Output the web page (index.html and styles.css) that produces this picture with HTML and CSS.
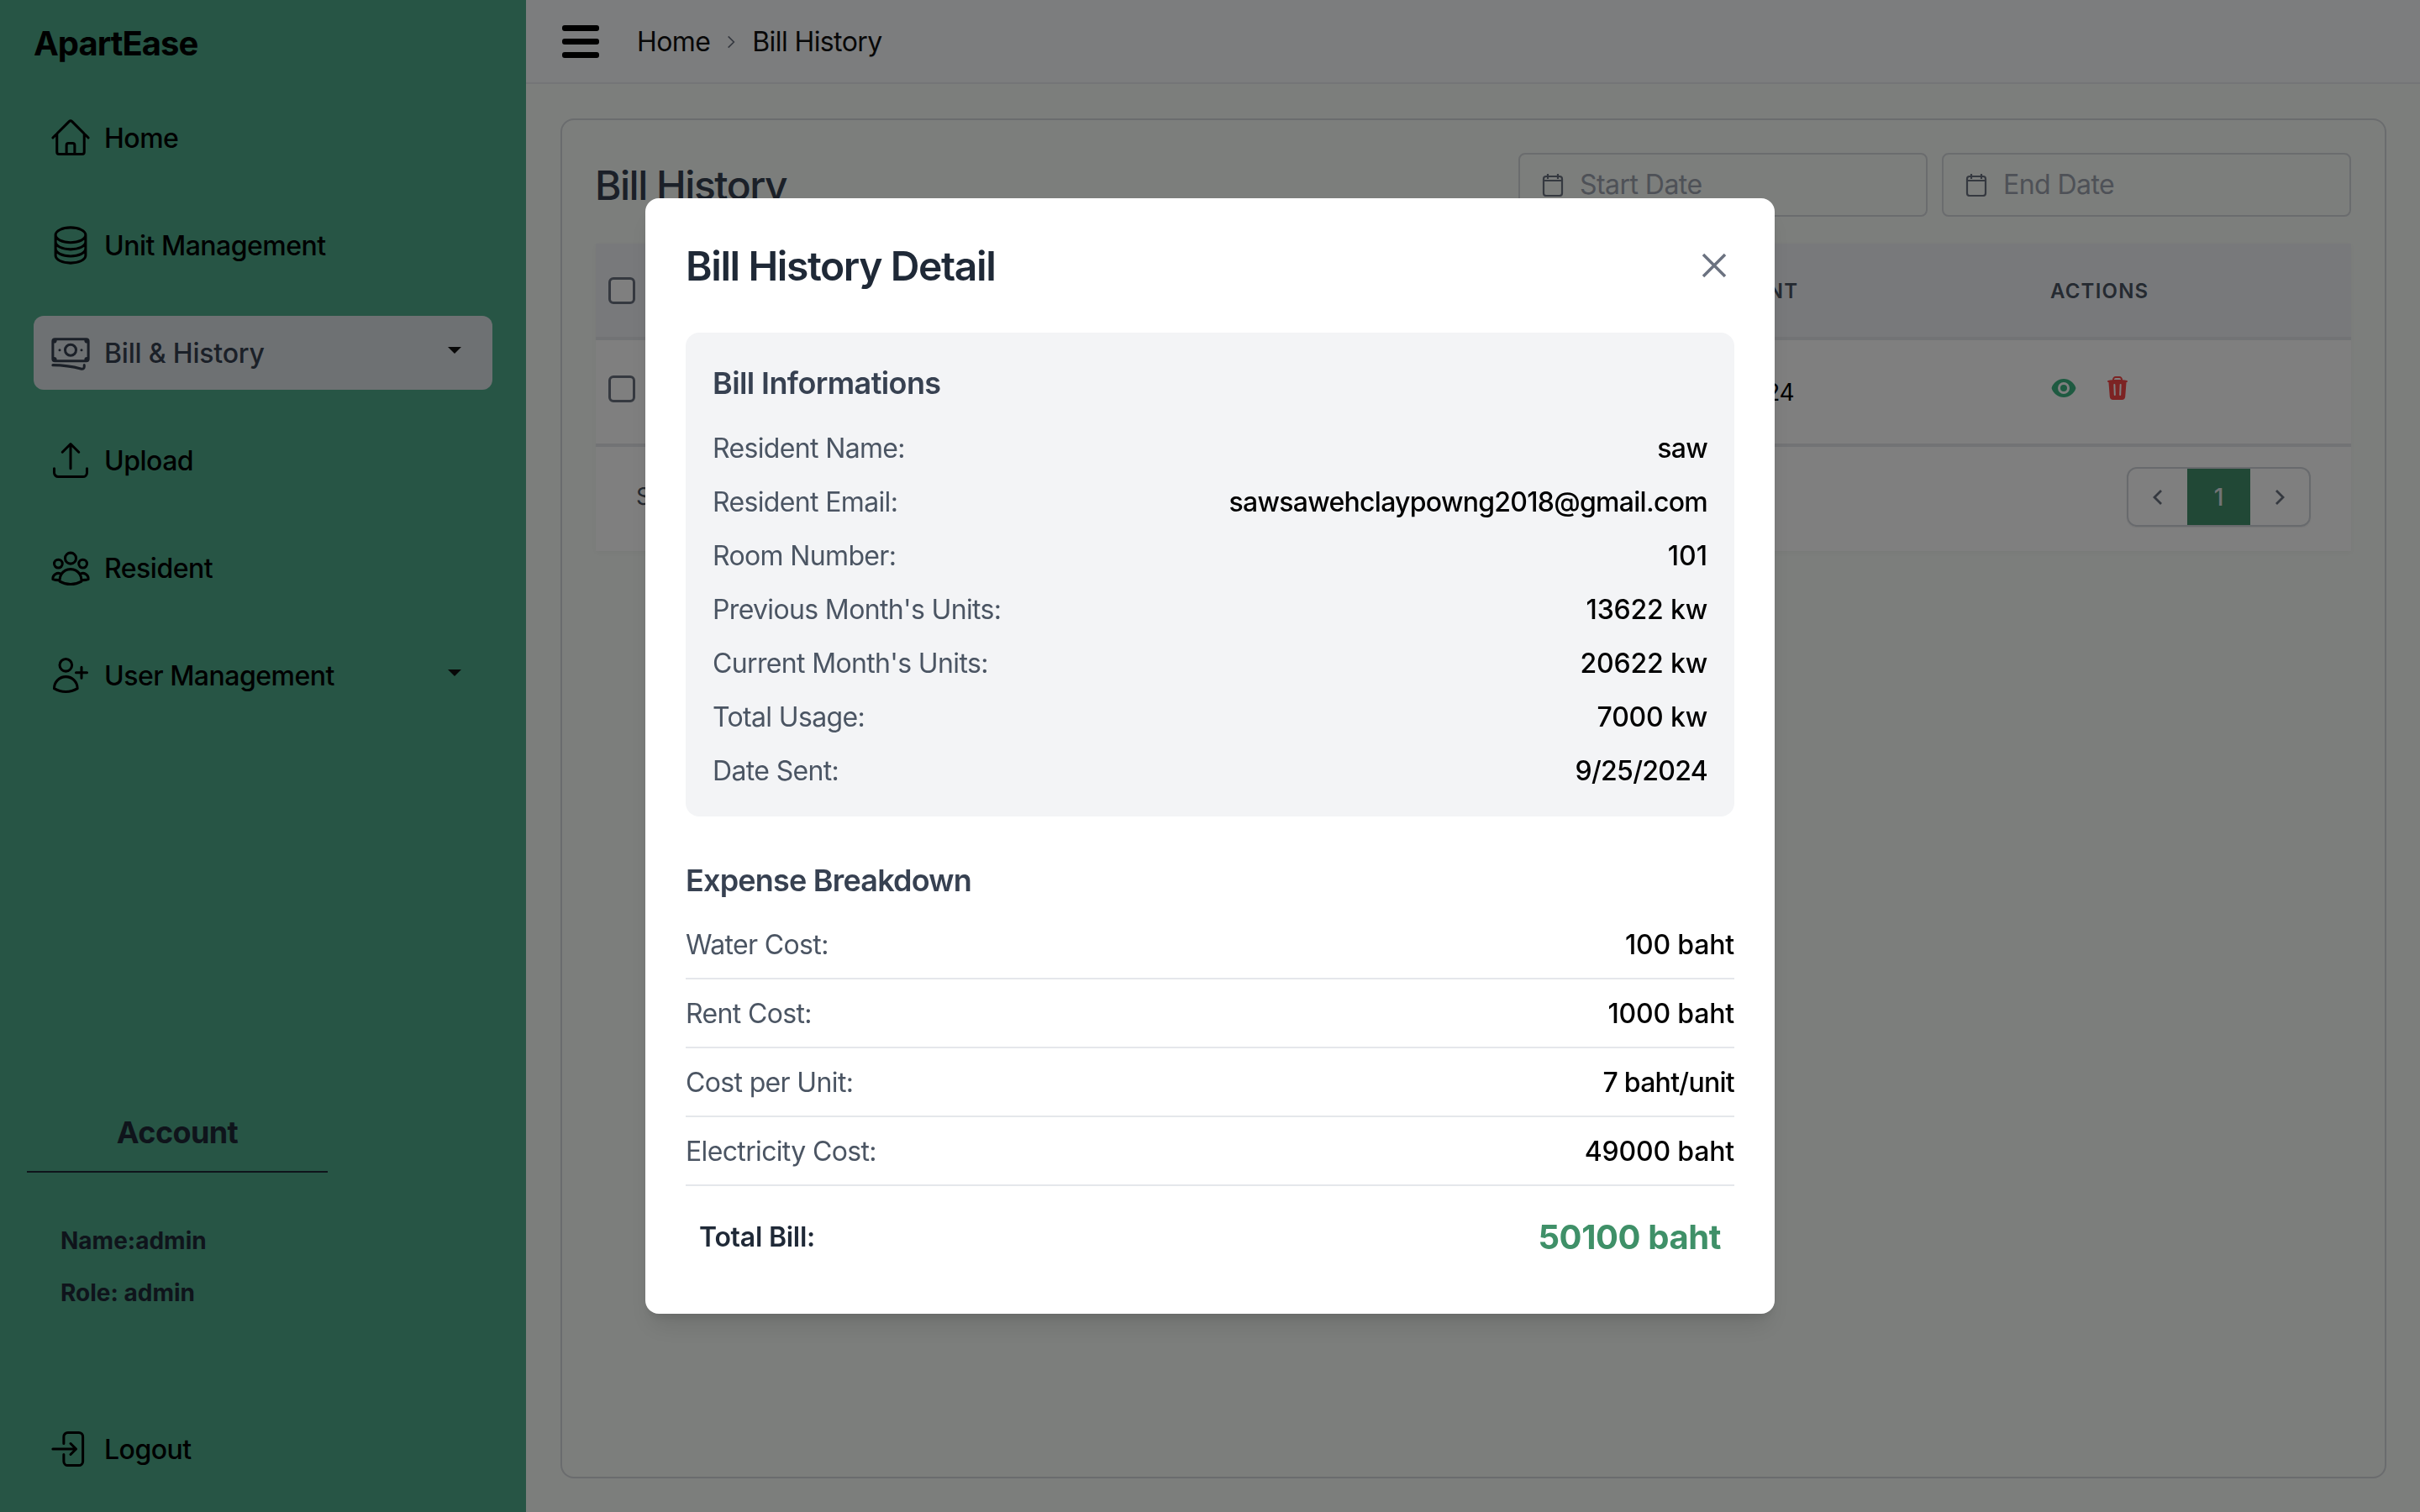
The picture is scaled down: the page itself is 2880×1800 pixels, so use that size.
FILE: index.html
```html
<!DOCTYPE html>
<html lang="en">
<head>
<meta charset="utf-8">
<title>ApartEase - Bill History</title>
<link rel="stylesheet" href="styles.css">
</head>
<body>
<div class="app">
  <aside class="sidebar">
    <div class="logo">ApartEase</div>
    <nav class="nav">
      <a class="nav-item">
        <svg class="nav-icon" viewBox="0 0 24 24"><path d="m2.25 12 8.954-8.955c.44-.439 1.152-.439 1.591 0L21.75 12M4.5 9.75v10.125c0 .621.504 1.125 1.125 1.125H9.75v-4.875c0-.621.504-1.125 1.125-1.125h2.25c.621 0 1.125.504 1.125 1.125V21h4.125c.621 0 1.125-.504 1.125-1.125V9.75M8.25 21h8.25"/></svg>
        <span>Home</span>
      </a>
      <a class="nav-item">
        <svg class="nav-icon" viewBox="0 0 24 24"><path d="M20.25 6.375c0 2.278-3.694 4.125-8.25 4.125S3.75 8.653 3.75 6.375m16.5 0c0-2.278-3.694-4.125-8.25-4.125S3.75 4.097 3.75 6.375m16.5 0v11.25c0 2.278-3.694 4.125-8.25 4.125s-8.25-1.847-8.25-4.125V6.375m16.5 0v3.75m-16.5-3.75v3.75m16.5 0v3.75C20.25 16.153 16.556 18 12 18s-8.25-1.847-8.25-4.125v-3.75m16.5 0c0 2.278-3.694 4.125-8.25 4.125s-8.25-1.847-8.25-4.125"/></svg>
        <span>Unit Management</span>
      </a>
      <a class="nav-item active">
        <svg class="nav-icon" viewBox="0 0 24 24"><path d="M2.25 18.75a60.07 60.07 0 0 1 15.797 2.101c.727.198 1.453-.342 1.453-1.096V18.75M3.75 4.5v.75A.75.75 0 0 1 3 6h-.75m0 0v-.375c0-.621.504-1.125 1.125-1.125H20.25M2.25 6v9m18-10.5v.75c0 .414.336.75.75.75h.75m-1.5-1.5h.375c.621 0 1.125.504 1.125 1.125v9.75c0 .621-.504 1.125-1.125 1.125h-.375m1.5-1.5H21a.75.75 0 0 0-.75.75v.75m0 0H3.75m0 0h-.375a1.125 1.125 0 0 1-1.125-1.125V15m1.5 1.5v-.75A.75.75 0 0 0 3 15h-.75M15 10.5a3 3 0 1 1-6 0 3 3 0 0 1 6 0Zm3 0h.008v.008H18V10.5Zm-12 0h.008v.008H6V10.5Z"/></svg>
        <span>Bill &amp; History</span>
        <i class="caret"></i>
      </a>
      <a class="nav-item">
        <svg class="nav-icon" viewBox="0 0 24 24"><path d="M3 16.5v2.25A2.25 2.25 0 0 0 5.25 21h13.5A2.25 2.25 0 0 0 21 18.75V16.5m-13.5-9L12 3m0 0 4.5 4.5M12 3v13.5"/></svg>
        <span>Upload</span>
      </a>
      <a class="nav-item">
        <svg class="nav-icon" viewBox="0 0 24 24"><path d="M18 18.72a9.094 9.094 0 0 0 3.741-.479 3 3 0 0 0-4.682-2.72m.94 3.198.001.031c0 .225-.012.447-.037.666A11.944 11.944 0 0 1 12 21c-2.17 0-4.207-.576-5.963-1.584A6.062 6.062 0 0 1 6 18.719m12 0a5.971 5.971 0 0 0-.941-3.197m0 0A5.995 5.995 0 0 0 12 12.75a5.995 5.995 0 0 0-5.058 2.772m0 0a3 3 0 0 0-4.681 2.72 8.986 8.986 0 0 0 3.74.477m.94-3.197a5.971 5.971 0 0 0-.94 3.197M15 6.75a3 3 0 1 1-6 0 3 3 0 0 1 6 0Zm6 3a2.25 2.25 0 1 1-4.5 0 2.25 2.25 0 0 1 4.5 0Zm-13.5 0a2.25 2.25 0 1 1-4.5 0 2.25 2.25 0 0 1 4.5 0Z"/></svg>
        <span>Resident</span>
      </a>
      <a class="nav-item">
        <svg class="nav-icon" viewBox="0 0 24 24"><path d="M18 7.5v3m0 0v3m0-3h3m-3 0h-3m-2.25-4.125a3.375 3.375 0 1 1-6.75 0 3.375 3.375 0 0 1 6.75 0ZM3 19.235v-.11a6.375 6.375 0 0 1 12.75 0v.109A12.318 12.318 0 0 1 9.374 21c-2.331 0-4.512-.645-6.374-1.766Z"/></svg>
        <span>User Management</span>
        <i class="caret"></i>
      </a>
    </nav>
    <section class="account">
      <h3 class="account-title">Account</h3>
      <div class="account-info">
        <p>Name:admin</p>
        <p>Role: admin</p>
      </div>
    </section>
    <a class="nav-item logout">
      <svg class="nav-icon" viewBox="0 0 24 24"><path d="M8.25 9V5.25A2.25 2.25 0 0 1 10.5 3h6a2.25 2.25 0 0 1 2.25 2.25v13.5A2.25 2.25 0 0 1 16.5 21h-6a2.25 2.25 0 0 1-2.25-2.25V15M12 9l3 3m0 0-3 3m3-3H2.25"/></svg>
      <span>Logout</span>
    </a>
  </aside>

  <main class="main">
    <header class="topbar">
      <div class="burger"><i></i><i></i><i></i></div>
      <div class="crumbs">
        <span>Home</span>
        <svg class="crumb-sep" viewBox="0 0 12 20"><path d="M2 2l8 8-8 8"/></svg>
        <span>Bill History</span>
      </div>
    </header>
    <div class="content">
      <section class="card">
        <div class="card-head">
          <h1 class="page-title">Bill History</h1>
          <div class="dates">
            <div class="date-input">
              <svg class="cal" viewBox="1 0 24 28"><path d="M7 1v6M19 1v6M2 9h22M5 4h16a3 3 0 0 1 3 3v17a3 3 0 0 1-3 3H5a3 3 0 0 1-3-3V7a3 3 0 0 1 3-3Z"/></svg>
              <span>Start Date</span>
            </div>
            <div class="date-input">
              <svg class="cal" viewBox="1 0 24 28"><path d="M7 1v6M19 1v6M2 9h22M5 4h16a3 3 0 0 1 3 3v17a3 3 0 0 1-3 3H5a3 3 0 0 1-3-3V7a3 3 0 0 1 3-3Z"/></svg>
              <span>End Date</span>
            </div>
          </div>
        </div>
        <div class="table">
          <div class="row head">
            <div><i class="check"></i></div>
            <div></div>
            <div class="date-col">DATE SENT</div>
            <div>ACTIONS</div>
          </div>
          <div class="row body">
            <div><i class="check"></i></div>
            <div></div>
            <div class="date-col">9/25/2024</div>
            <div class="actions">
              <svg class="act-eye" viewBox="0 0 24 24"><path fill-rule="evenodd" d="M12 15a3 3 0 1 0 0-6 3 3 0 0 0 0 6ZM1.323 11.447C2.811 6.976 7.028 3.75 12.001 3.75c4.97 0 9.185 3.223 10.675 7.69.12.362.12.752 0 1.113-1.487 4.471-5.705 7.697-10.677 7.697-4.97 0-9.186-3.223-10.675-7.69a1.762 1.762 0 0 1 0-1.113ZM17.25 12a5.25 5.25 0 1 1-10.5 0 5.25 5.25 0 0 1 10.5 0Z"/></svg>
              <svg class="act-trash" viewBox="0 0 24 24"><path fill-rule="evenodd" d="M16.5 4.478v.227a48.816 48.816 0 0 1 3.878.512.75.75 0 1 1-.256 1.478l-.209-.035-1.005 13.07a3 3 0 0 1-2.991 2.77H8.084a3 3 0 0 1-2.991-2.77L4.087 6.66l-.209.035a.75.75 0 0 1-.256-1.478A48.567 48.567 0 0 1 7.5 4.705v-.227c0-1.564 1.213-2.9 2.816-2.951a52.662 52.662 0 0 1 3.369 0c1.603.051 2.815 1.387 2.815 2.951Zm-6.136-1.452a51.196 51.196 0 0 1 3.273 0C14.39 3.05 15 3.684 15 4.478v.113a49.488 49.488 0 0 0-6 0v-.113c0-.794.609-1.428 1.364-1.452Zm-.355 5.945a.75.75 0 1 0-1.5.058l.347 9a.75.75 0 1 0 1.499-.058l-.346-9Zm5.48.058a.75.75 0 1 0-1.498-.058l-.347 9a.75.75 0 0 0 1.5.058l.345-9Z"/></svg>
            </div>
          </div>
          <div class="table-foot">
            <span class="showing">S</span>
            <div class="pager">
              <span class="pg"><svg viewBox="0 0 12 20"><path d="M10 2l-8 8 8 8"/></svg></span>
              <span class="pg current">1</span>
              <span class="pg"><svg viewBox="0 0 12 20"><path d="M2 2l8 8-8 8"/></svg></span>
            </div>
          </div>
        </div>
      </section>
    </div>
  </main>
</div>

<div class="overlay">
  <div class="modal">
    <div class="modal-head">
      <h2>Bill History Detail</h2>
      <svg class="close" viewBox="0 0 30 30"><path d="M2 2l26 26M28 2L2 28"/></svg>
    </div>
    <div class="info-panel">
      <h3>Bill Informations</h3>
      <div class="info-rows">
        <div class="kv"><span>Resident Name:</span><b class="tight">saw</b></div>
        <div class="kv"><span>Resident Email:</span><b class="tight">sawsawehclaypowng2018@gmail.com</b></div>
        <div class="kv"><span>Room Number:</span><b class="wide">101</b></div>
        <div class="kv"><span>Previous Month's Units:</span><b>13622 kw</b></div>
        <div class="kv"><span>Current Month's Units:</span><b>20622 kw</b></div>
        <div class="kv"><span>Total Usage:</span><b>7000 kw</b></div>
        <div class="kv"><span>Date Sent:</span><b class="tight">9/25/2024</b></div>
      </div>
    </div>
    <h3 class="expense-title">Expense Breakdown</h3>
    <div class="expense-rows">
      <div class="kv line"><span>Water Cost:</span><b>100 baht</b></div>
      <div class="kv line"><span>Rent Cost:</span><b>1000 baht</b></div>
      <div class="kv line"><span>Cost per Unit:</span><b class="tight">7 baht/unit</b></div>
      <div class="kv line"><span>Electricity Cost:</span><b>49000 baht</b></div>
    </div>
    <div class="total">
      <span>Total Bill:</span>
      <b>50100 baht</b>
    </div>
  </div>
</div>
</body>
</html>
```
FILE: styles.css
```css
* { box-sizing: border-box; }
html, body { margin: 0; height: 100%; }
body {
  font-family: Inter, "Noto Sans", "Liberation Sans", sans-serif;
  font-size: 32px;
  line-height: 48px;
  color: #000;
  background: #fff;
  overflow: hidden;
}
h1, h2, h3, p { margin: 0; }

.app { display: flex; height: 1800px; }

/* Sidebar */
.sidebar {
  width: 626px;
  flex: none;
  background: #4eaa8a;
  display: flex;
  flex-direction: column;
  padding: 24px 0 31px;
}
.logo {
  font-size: 40px;
  line-height: 56px;
  font-weight: 700;
  letter-spacing: -1px;
  padding-left: 40px;
  margin-bottom: 40px;
}
.nav {
  display: flex;
  flex-direction: column;
  gap: 40px;
  padding: 0 40px;
}
.nav-item {
  height: 88px;
  display: flex;
  align-items: center;
  padding-left: 18px;
  gap: 14px;
  border-radius: 12px;
  font-weight: 500;
  letter-spacing: -0.5px;
  color: #000;
  position: relative;
}
.nav-item span { padding-top: 2px; }
.nav-item.active { background: #dde3e6; color: #374151; letter-spacing: -0.2px; }
.nav-icon {
  width: 52px;
  height: 52px;
  flex: none;
  fill: none;
  stroke: currentColor;
  stroke-width: 1.4;
  stroke-linecap: round;
  stroke-linejoin: round;
}
.caret {
  position: absolute;
  left: 493px;
  top: 37px;
  width: 0;
  height: 0;
  border-left: 8px solid transparent;
  border-right: 8px solid transparent;
  border-top: 8px solid #111;
}
.account { margin-top: auto; width: 358px; margin-left: 32px; }
.account-title {
  font-size: 36px;
  line-height: 56px;
  font-weight: 700;
  letter-spacing: -0.6px;
  text-align: center;
  color: #1f2937;
  padding-bottom: 18px;
  border-bottom: 2px solid #1f2937;
}
.account-info {
  padding: 61px 0 0 40px;
  font-size: 28px;
  line-height: 40px;
  font-weight: 700;
  color: #1f2937;
  display: flex;
  flex-direction: column;
  gap: 22px;
}
.logout { margin: 122px 40px 0; }

/* Main */
.main { flex: 1; display: flex; flex-direction: column; background: #fff; min-width: 0; }
.topbar {
  height: 100px;
  flex: none;
  display: flex;
  align-items: center;
  padding-left: 43px;
  background: #f8fafd;
  border-bottom: 2px solid #e9ebee;
}
.burger { width: 44px; display: flex; flex-direction: column; gap: 9px; margin-right: 45px; }
.burger i { display: block; height: 7px; border-radius: 3px; background: #000; }
.crumbs { display: flex; align-items: center; gap: 20px; color: #111; letter-spacing: -0.6px; padding-top: 1px; }
.crumb-sep { width: 10px; height: 18px; fill: none; stroke: #6b7280; stroke-width: 2; }

.content { flex: 1; display: flex; padding: 41px 40px 40px 41px; min-height: 0; background: #f8fcf8; }
.card {
  flex: 1;
  border: 2px solid #d5d8dc;
  border-radius: 16px;
  padding: 39px 40px 0;
}
.card-head {
  display: flex;
  justify-content: space-between;
  align-items: center;
  height: 75px;
  margin-bottom: 33px;
}
.page-title {
  font-size: 48px;
  line-height: 64px;
  font-weight: 500;
  letter-spacing: -1.5px;
  color: #374151;
  padding-top: 2px;
  margin-left: -1px;
}
.dates { display: flex; gap: 17px; }
.date-input {
  width: 487px;
  height: 76px;
  border: 2px solid #d5d8dc;
  border-radius: 8px;
  display: flex;
  align-items: center;
  padding-left: 26px;
  gap: 19px;
  color: #9ca3af;
  letter-spacing: -0.55px;
}
.cal { width: 26px; height: 28px; fill: none; stroke: #6b7280; stroke-width: 2.2; }

.table { background: #fff; box-shadow: 0 2px 6px rgba(0,0,0,.03); }
.row {
  display: grid;
  grid-template-columns: 72px 1fr 444px 357px;
  align-items: center;
  border-bottom: 4px solid #e5e7eb;
}
.row.head {
  height: 115px;
  background: #f1f3f7;
  font-size: 24px;
  font-weight: 600;
  letter-spacing: 1.2px;
  color: #4b5563;
}
.row.head .date-col, .row.head .date-col + div { padding-top: 2px; }
.row.head .date-col + div { margin-left: -1px; }
.row.body { height: 127px; font-size: 28px; }
.row.body .date-col { letter-spacing: -0.3px; }
.row.body .check { margin-top: -8px; }
.check {
  display: block;
  width: 32px;
  height: 32px;
  margin-left: 15px;
  border: 3px solid #6b7280;
  border-radius: 6px;
  background: #fff;
}
.actions { display: flex; align-items: center; gap: 37px; margin-top: -10px; }
.act-eye { width: 32px; height: 32px; fill: #3cb482; margin-left: -1px; }
.act-trash { width: 32px; height: 32px; fill: #f94646; margin-left: -5px; }

.table-foot {
  height: 124px;
  padding: 24px 48px 0;
  display: flex;
  justify-content: space-between;
  align-items: flex-start;
  font-size: 28px;
  color: #4b5563;
}
.showing { line-height: 71px; }
.pager {
  display: flex;
  height: 71px;
  border: 2px solid #d1d5db;
  border-radius: 12px;
  overflow: hidden;
  box-shadow: 0 1px 2px rgba(0,0,0,.08);
}
.pg {
  width: 70px;
  display: flex;
  align-items: center;
  justify-content: center;
  color: #e5e7eb;
  font-weight: 500;
  font-size: 28px;
}
.pg svg { width: 12px; height: 20px; fill: none; stroke: #6b7280; stroke-width: 2.8; }
.pg.current { width: 75px; background: #42916c; border: 0; }

/* Modal */
.overlay {
  position: fixed;
  inset: 0;
  background: rgba(0,0,0,.5);
  display: flex;
  align-items: center;
  justify-content: center;
}
.modal {
  width: 1344px;
  height: 1328px;
  background: #fff;
  border-radius: 16px;
  padding: 48px;
  box-shadow: 0 20px 30px -6px rgba(0,0,0,.1), 0 8px 12px -4px rgba(0,0,0,.1);
}
.modal-head {
  display: flex;
  justify-content: space-between;
  align-items: center;
  height: 64px;
  margin-bottom: 48px;
}
.modal-head h2 {
  font-size: 48px;
  line-height: 64px;
  font-weight: 600;
  letter-spacing: -1.4px;
  color: #1f2937;
  padding-top: 2px;
}
.close { width: 30px; height: 30px; margin-right: 9px; fill: none; stroke: #6b7280; stroke-width: 3.5; }
.info-panel {
  background: #f3f4f6;
  border-radius: 16px;
  padding: 32px;
  margin-bottom: 48px;
}
.info-panel h3, .expense-title {
  font-size: 36px;
  line-height: 56px;
  font-weight: 600;
  letter-spacing: -0.6px;
  color: #374151;
  margin-bottom: 24px;
}
.expense-title { letter-spacing: -0.8px; }
.info-rows { display: flex; flex-direction: column; gap: 16px; }
.kv { display: flex; justify-content: space-between; color: #4b5563; letter-spacing: -0.65px; }
.kv > * { padding-top: 2px; height: 48px; }
.kv b { font-weight: 500; color: #000; letter-spacing: -0.18px; }
.kv b.tight { letter-spacing: -0.72px; }
.kv b.wide { letter-spacing: 0; }
.expense-rows { display: flex; flex-direction: column; gap: 16px; }
.kv.line { padding-bottom: 16px; border-bottom: 2px solid #e5e7eb; }
.kv.line > * { padding-top: 1px; }
.total {
  display: flex;
  justify-content: space-between;
  align-items: center;
  margin-top: 17px;
  padding: 16px;
  font-weight: 600;
  letter-spacing: -0.25px;
  color: #1f2937;
}
.total b { font-size: 40px; line-height: 56px; font-weight: 700; letter-spacing: -0.4px; color: #3f9068; }
```
